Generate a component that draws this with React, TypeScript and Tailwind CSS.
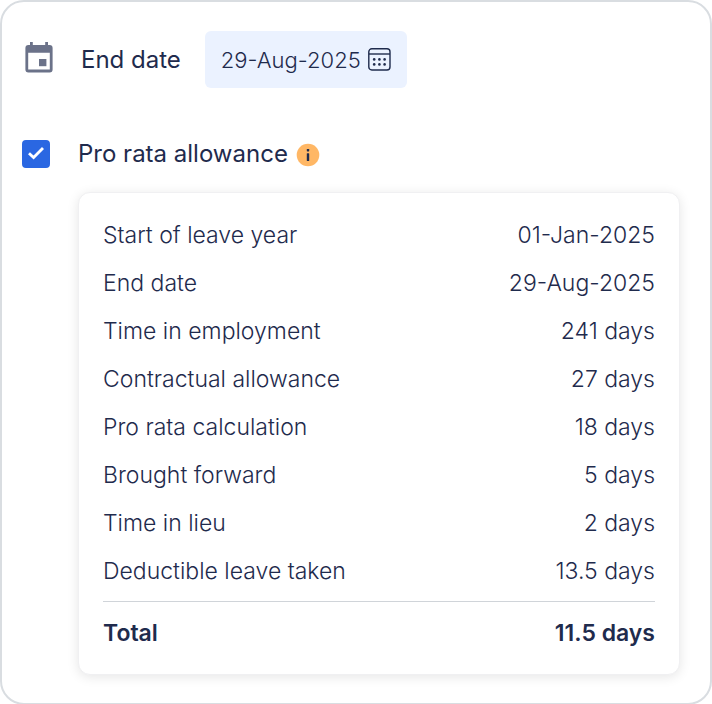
import React, { useState } from 'react';

type Row = { label: string; value: string };

const rows: Row[] = [
  { label: 'Start of leave year', value: '01-Jan-2025' },
  { label: 'End date', value: '29-Aug-2025' },
  { label: 'Time in employment', value: '241 days' },
  { label: 'Contractual allowance', value: '27 days' },
  { label: 'Pro rata calculation', value: '18 days' },
  { label: 'Brought forward', value: '5 days' },
  { label: 'Time in lieu', value: '2 days' },
  { label: 'Deductible leave taken', value: '13.5 days' },
];

function EventIcon() {
  return (
    <svg width="28" height="31" viewBox="0 0 28 31" fill="#6b7289" aria-hidden="true">
      <path
        fillRule="evenodd"
        d="M5 0h2.8v3h12.4V0H23v3h1.6a3 3 0 0 1 3 3v21.4a3 3 0 0 1-3 3H3.4a3 3 0 0 1-3-3V6a3 3 0 0 1 3-3H5zM3.2 10.8v16.8h21.6V10.8z"
      />
      <rect x="14" y="17" width="7.4" height="7.2" />
    </svg>
  );
}

function CalendarIcon() {
  return (
    <svg width="23" height="23" viewBox="0 0 23 23" fill="none" aria-hidden="true">
      <rect x="0.8" y="0.8" width="21.2" height="21.2" rx="3" stroke="#1f2b4d" strokeWidth="1.4" />
      <path d="M1 6h21" stroke="#1f2b4d" strokeWidth="1.4" />
      <g fill="#1f2b4d">
        <circle cx="6.2" cy="11.4" r="1.3" />
        <circle cx="11.4" cy="11.4" r="1.3" />
        <circle cx="16.6" cy="11.4" r="1.3" />
        <circle cx="6.2" cy="16.4" r="1.3" />
        <circle cx="11.4" cy="16.4" r="1.3" />
        <circle cx="16.6" cy="16.4" r="1.3" />
      </g>
    </svg>
  );
}

function InfoIcon() {
  return (
    <svg width="24" height="24" viewBox="0 0 24 24" fill="none" aria-hidden="true">
      <circle cx="12" cy="12" r="11.3" fill="#ffb765" />
      <rect x="10.8" y="6" width="2.4" height="2.4" rx="0.6" fill="#1f2b4d" />
      <rect x="10.8" y="10.2" width="2.4" height="7.8" rx="0.6" fill="#1f2b4d" />
    </svg>
  );
}

export default function App() {
  const [endDate, setEndDate] = useState('29-Aug-2025');
  const [proRata, setProRata] = useState(true);

  return (
    <main className="rounded-3xl border-2 border-[#d9dde1] bg-white px-5 pt-7 pb-7 font-['Inter','Liberation_Sans',sans-serif] text-[23px] leading-9 font-light text-[#1f2b4d]">
      {/* End date */}
      <div className="flex items-center pt-px">
        <div className="w-[59px] pb-1 pl-[3px]">
          <EventIcon />
        </div>
        <label htmlFor="end-date" className="pt-px text-2xl font-normal">
          End date
        </label>
        <div className="ml-6 flex h-[57px] items-center gap-1.5 rounded-md bg-[#ebf2ff] px-4">
          <input
            id="end-date"
            type="text"
            value={endDate}
            onChange={(e) => setEndDate(e.target.value)}
            className="w-[141px] bg-transparent pt-px text-[22px] outline-none"
          />
          <button type="button" aria-label="Open calendar">
            <CalendarIcon />
          </button>
        </div>
      </div>

      {/* Pro rata toggle */}
      <div className="mt-12 flex h-9 items-center">
        <div className="grid w-14 items-center">
          <input
            id="pro-rata"
            type="checkbox"
            checked={proRata}
            onChange={(e) => setProRata(e.target.checked)}
            className="col-start-1 row-start-1 size-7 appearance-none rounded-sm border-2 border-[#2a67e2] checked:bg-[#2a67e2]"
          />
          {proRata && (
            <svg className="pointer-events-none col-start-1 row-start-1" width="28" height="28" viewBox="0 0 28 28" fill="none" aria-hidden="true">
              <path d="M7 13.2l4.6 4.4 9.4-9.6" stroke="white" strokeWidth="2.8" />
            </svg>
          )}
        </div>
        <label htmlFor="pro-rata" className="text-2xl font-normal">
          Pro rata allowance
        </label>
        <button type="button" aria-label="About pro rata allowance" className="ml-2 pt-0.5">
          <InfoIcon />
        </button>
      </div>

      {/* Breakdown */}
      <div className="mt-5 mr-2.5 ml-14 rounded-xl border border-[#f0f0f2] bg-white px-6 pt-[18px] pb-4 shadow-[0_2px_12px_rgba(0,0,0,0.1)]">
        <table className="w-full">
          <tbody>
            {rows.map((row) => (
              <tr key={row.label} className="h-12">
                <th scope="row" className="text-left font-light">
                  {row.label}
                </th>
                <td className="text-right">{row.value}</td>
              </tr>
            ))}
          </tbody>
        </table>
        <table className="mt-1.5 w-full border-t border-[#d0d4d9] font-semibold">
          <tbody>
            <tr className="h-14">
              <th scope="row" className="pt-1.5 text-left font-semibold">
                Total
              </th>
              <td className="pt-1.5 text-right">11.5 days</td>
            </tr>
          </tbody>
        </table>
      </div>
    </main>
  );
}
